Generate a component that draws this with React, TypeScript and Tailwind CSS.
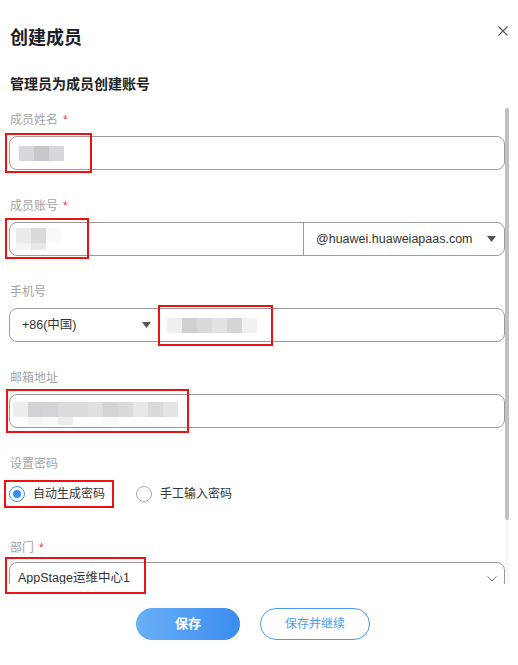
import React from "react";

type Row = { h: number; cells: string[] };

function Pix({ rows }: { rows: Row[] }) {
  return (
    <div className="flex flex-col">
      {rows.map((r, i) => (
        <div key={i} className="flex">
          {r.cells.map((c, j) => (
            <div key={j} className="w-[15px] shrink-0" style={{ height: r.h, background: c }} />
          ))}
        </div>
      ))}
    </div>
  );
}

function RedBox({ className }: { className: string }) {
  return <div className={"pointer-events-none absolute border-2 border-[#ee1111] " + className} />;
}

function Label({ text, required }: { text: string; required?: boolean }) {
  return (
    <div className="flex h-[18px] items-center pl-[1px] text-[12px] leading-[18px] text-[#a3a3a3]">
      {text}
      {required && <span className="ml-[5px] text-[#f04040]">*</span>}
    </div>
  );
}

function Tri() {
  return (
    <svg width="9" height="6" viewBox="0 0 9 6" className="shrink-0">
      <path d="M0 0 L9 0 L4.5 6 Z" fill="#555" />
    </svg>
  );
}

export default function App() {
  return (
    <div className="relative flex h-[665px] w-[518px] flex-col overflow-hidden bg-white font-['Liberation_Sans','Noto_Sans_CJK_SC',sans-serif] text-[#333]">
      {/* close */}
      <svg className="absolute left-[498px] top-[26px]" width="10" height="10" viewBox="0 0 10 10">
        <path d="M0.5 0.5 L9.5 9.5 M9.5 0.5 L0.5 9.5" stroke="#555" strokeWidth="1.1" />
      </svg>

      {/* header */}
      <div className="pl-[10px] pt-[26px] text-[18px] font-bold leading-[24px] text-[#1c1c2a]">创建成员</div>
      <div className="pl-[10px] pt-[24px] text-[14px] font-bold leading-[20px] text-[#222]">管理员为成员创建账号</div>

      {/* body */}
      <div className="mt-[10px] flex h-[480px] pr-[9px]">
        <div className="flex w-[505px] flex-col pl-[9px] pt-[7px]">
          {/* 成员姓名 */}
          <Label text="成员姓名" required />
          <div className="relative mt-[7px] h-[34px]">
            <div className="flex h-full items-center rounded-[8px] border border-[#9c9c9c] pl-[9px]">
              <Pix rows={[{ h: 15, cells: ["#d8d8dc", "#c8c8cc", "#d8d8dc"] }]} />
            </div>
            <RedBox className="left-[-4px] top-[-3px] h-[40px] w-[87px]" />
          </div>

          {/* 成员账号 */}
          <div className="mt-[27px]">
            <Label text="成员账号" required />
          </div>
          <div className="relative mt-[7px] h-[34px]">
            <div className="flex h-full rounded-[8px] border border-[#9c9c9c]">
              <div className="flex flex-1 items-center pl-[6px]">
                <Pix
                  rows={[
                    { h: 15, cells: ["#ebebed", "#dadadc", "#fafafa"] },
                    { h: 7, cells: ["#f5f5f5", "#e8e8ea", "#fdfdfd"] },
                  ]}
                />
              </div>
              <div className="flex w-[201px] items-center justify-between border-l border-[#9c9c9c] pl-[12px] pr-[8px] text-[12.5px] text-[#333]">
                <span>@huawei.huaweiapaas.com</span>
                <Tri />
              </div>
            </div>
            <RedBox className="left-[-4px] top-[-4px] h-[41px] w-[84px]" />
          </div>

          {/* 手机号 */}
          <div className="mt-[27px]">
            <Label text="手机号" />
          </div>
          <div className="relative mt-[7px] h-[34px]">
            <div className="flex h-full rounded-[8px] border border-[#9c9c9c]">
              <div className="flex w-[149px] items-center justify-between border-r border-[#9c9c9c] pl-[12px] pr-[7px] text-[12.5px] text-[#333]">
                <span>+86(中国)</span>
                <Tri />
              </div>
              <div className="flex flex-1 items-center pl-[8px]">
                <Pix rows={[{ h: 15, cells: ["#efeff0", "#d0d0d4", "#dadadc", "#e2e2e4", "#d5d5d8", "#f1f1f1"] }]} />
              </div>
            </div>
            <RedBox className="left-[149px] top-[-3px] h-[41px] w-[115px]" />
          </div>

          {/* 邮箱地址 */}
          <div className="mt-[27px]">
            <Label text="邮箱地址" />
          </div>
          <div className="relative mt-[7px] h-[34px]">
            <div className="flex h-full items-center rounded-[8px] border border-[#9c9c9c] pl-[3px] pt-[5px]">
              <Pix
                rows={[
                  {
                    h: 15,
                    cells: ["#ededef", "#d2d2d6", "#d4d4d8", "#dcdcde", "#dcdcde", "#e0e0e2", "#d4d4d7", "#dadadc", "#e8e8ea", "#dadadc", "#e4e4e6"],
                  },
                  {
                    h: 8,
                    cells: ["#ffffff", "#f6f6f6", "#f8f8f8", "#ededed", "#ffffff", "#ffffff", "#f8f8f8", "#ffffff", "#ffffff", "#ffffff", "#ffffff"],
                  },
                ]}
              />
            </div>
            <RedBox className="left-[-3px] top-[-5px] h-[44px] w-[183px]" />
          </div>

          {/* 设置密码 */}
          <div className="mt-[27px]">
            <Label text="设置密码" />
          </div>
          <div className="relative mt-[11px] flex h-[20px] items-center text-[12px] text-[#333]">
            <div className="flex items-center">
              <div className="flex h-[16px] w-[16px] items-center justify-center rounded-full border border-[#3a8ef2]">
                <div className="h-[8px] w-[8px] rounded-full bg-[#3a8ef2]" />
              </div>
              <span className="ml-[8px]">自动生成密码</span>
            </div>
            <div className="ml-[31px] flex items-center">
              <div className="h-[16px] w-[16px] rounded-full border border-[#aaaaaa]" />
              <span className="ml-[8px]">手工输入密码</span>
            </div>
            <RedBox className="left-[-5px] top-[-4px] h-[28px] w-[110px]" />
          </div>

          {/* 部门 */}
          <div className="mt-[35px]">
            <Label text="部门" required />
          </div>
          <div className="relative mt-[5px] h-[22px]">
            <div className="h-full overflow-hidden">
              <div className="flex h-[34px] items-start justify-between rounded-[8px] border border-[#9c9c9c] pl-[8px] pr-[7px] pt-[6px] text-[12.5px] leading-[18px] text-[#333]">
                <span>AppStage运维中心1</span>
                <svg width="10" height="6" viewBox="0 0 10 6" className="mt-[7px]">
                  <path d="M0.5 0.5 L5 5 L9.5 0.5" stroke="#777" strokeWidth="1" fill="none" />
                </svg>
              </div>
            </div>
            <RedBox className="left-[-4px] top-[-5px] h-[37px] w-[141px]" />
          </div>
        </div>

        {/* scrollbar */}
        <div className="flex w-[4px] flex-col bg-[#f8f8f8]">
          <div className="h-[4px] bg-white" />
          <div className="h-[412px] rounded-[2px] bg-[#c1c1c1]" />
        </div>
      </div>

      {/* footer */}
      <div className="flex justify-center gap-[20px] pr-[12px] pt-[24px]">
        <button className="h-[32px] w-[104px] rounded-full bg-gradient-to-r from-[#6ab0f7] to-[#3a8cf0] text-[13px] font-bold text-white">
          保存
        </button>
        <button className="h-[32px] w-[110px] rounded-full border border-[#4a9af5] bg-white text-[12px] text-[#4a9af5]">
          保存并继续
        </button>
      </div>
    </div>
  );
}
